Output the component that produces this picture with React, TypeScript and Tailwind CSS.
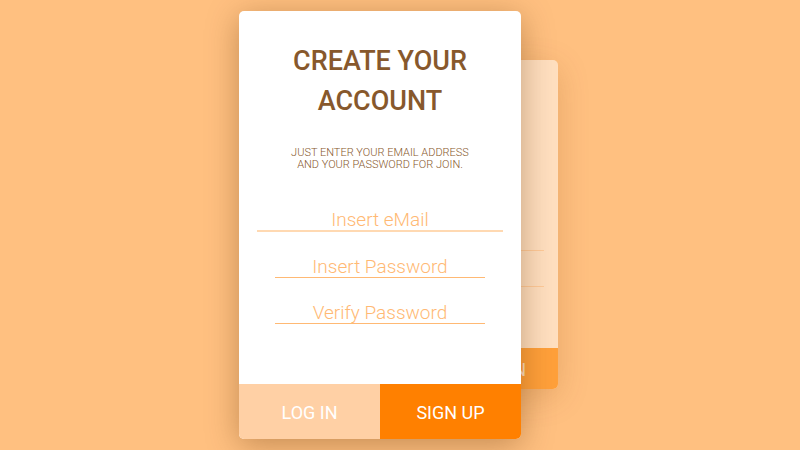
export default function App() {
  return (
    <main className="flex min-h-screen justify-center overflow-hidden bg-[#ffc080] pt-[11px] pr-[3px] font-['Roboto','Liberation_Sans',sans-serif]">
      <div className="relative w-[319px]">
        <section aria-hidden="true" className="absolute top-[49px] right-0 flex h-[329px] w-[218px] flex-col overflow-hidden rounded-[5px] bg-[#ffdfbf] text-white shadow-[0_8px_32px_rgba(128,64,0,0.2)]">
          <div className="flex flex-1 flex-col gap-[35px] px-[14px] pt-[190px]">
            <hr className="border-[#ffca98]" />
            <hr className="border-[#ffca98]" />
          </div>
          <div className="flex h-[41px] items-center justify-end bg-[#ffa03a] pt-[2px] pr-[32px] text-lg text-[#ffdfbf]">SIGN IN</div>
        </section>
        <form className="relative flex w-[282px] flex-col overflow-hidden rounded-[5px] bg-white text-center shadow-[0_6px_32px_rgba(90,45,0,0.36)]">
          <h1 className="px-8 pt-[30px] text-[27px] leading-10 font-medium text-[#87582c]">
            CREATE YOUR<br />ACCOUNT
          </h1>
          <p className="pt-[26px] text-[11px] leading-3 font-light text-[#87582c]">
            JUST ENTER YOUR EMAIL ADDRESS<br />AND YOUR PASSWORD FOR JOIN.
          </p>
          <div className="flex flex-col items-center gap-5 px-[18px] pt-[35px] pb-[60px] text-[19px] font-light">
            <input type="email" aria-label="Email" placeholder="Insert eMail" className="h-[26px] w-full border-b-2 border-[#ffd9b2] pt-[3px] text-center leading-[22px] placeholder:text-[#ffb974]" />
            <input type="password" aria-label="Password" placeholder="Insert Password" className="h-[26px] w-[210px] border-b border-[#ffb974] pt-[3px] text-center leading-[22px] placeholder:text-[#ffb974]" />
            <input type="password" aria-label="Verify password" placeholder="Verify Password" className="h-[26px] w-[210px] border-b border-[#ffb974] pt-[3px] text-center leading-[22px] placeholder:text-[#ffb974]" />
          </div>
          <div className="grid grid-cols-2 text-lg text-white">
            <button type="button" className="h-[55px] bg-[#ffd0a5] pt-[2px]">LOG IN</button>
            <button type="submit" className="h-[55px] bg-[#ff8000] pt-[2px]">SIGN UP</button>
          </div>
        </form>
      </div>
    </main>
  );
}
